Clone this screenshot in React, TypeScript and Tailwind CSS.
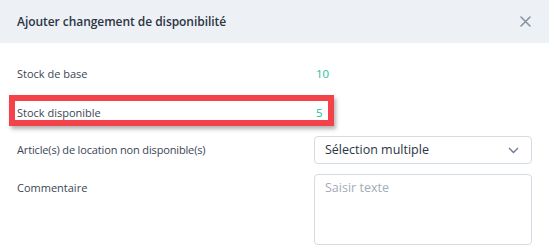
import React from "react";

export default function App() {
  return (
    <div
      className="w-[549px] h-[250px] bg-white overflow-hidden text-[#3b4656]"
      style={{ fontFamily: '"Open Sans", "Noto Sans", sans-serif' }}
    >
      <div className="h-[43px] bg-[#edf0f5] flex items-center justify-between pl-[17px] pr-[17px]">
        <div className="text-[12px] font-semibold text-[#2b3544] tracking-[-0.05px]">
          Ajouter changement de disponibilité
        </div>
        <svg width="11" height="11" viewBox="0 0 11 11" className="mr-[1px]">
          <path d="M1 1 L10 10 M10 1 L1 10" stroke="#8792a3" strokeWidth="1.6" strokeLinecap="round" />
        </svg>
      </div>

      <div className="flex flex-col pl-[17px] pr-[17px]">
        <div className="mt-[19px] h-[24px] flex items-center text-[11px]">
          <div className="w-[297px]">Stock de base</div>
          <div className="pl-[2px] text-[#27bd99] text-[11.5px]">10</div>
        </div>

        <div className="relative mt-[15px] h-[24px] flex items-center text-[11px]">
          <div className="absolute left-[-8px] top-[-6px] w-[325px] h-[31px] border-[6px] border-[#f4424a] shadow-[2px_3px_4px_rgba(0,0,0,0.3)] pointer-events-none" />
          <div className="w-[297px]">Stock disponible</div>
          <div className="pl-[2px] text-[#27bd99] text-[11.5px]">5</div>
        </div>

        <div className="mt-[11px] flex items-center text-[11px]">
          <div className="w-[297px] tracking-[-0.15px]">Article(s) de location non disponible(s)</div>
          <div className="w-[218px] h-[28px] border border-[#d5dbe3] rounded-[4px] flex items-center justify-between pl-[10px] pr-[12px]">
            <span className="text-[12.5px] text-[#2b3544]">Sélection multiple</span>
            <svg width="11" height="7" viewBox="0 0 11 7">
              <path d="M1 1 L5.5 5.5 L10 1" stroke="#6b7a90" strokeWidth="1.3" fill="none" />
            </svg>
          </div>
        </div>

        <div className="mt-[10px] flex items-start text-[11px]">
          <div className="w-[297px] mt-[2px] h-[24px] flex items-center">Commentaire</div>
          <div className="w-[218px] h-[71px] border border-[#d5dbe3] rounded-[4px] pl-[10px] pt-[4px]">
            <span className="text-[12.5px] text-[#a3abb8]">Saisir texte</span>
          </div>
        </div>
      </div>
    </div>
  );
}
